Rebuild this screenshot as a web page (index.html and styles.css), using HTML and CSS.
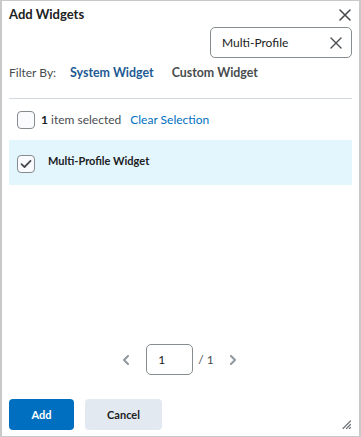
FILE: index.html
```html
<!DOCTYPE html>
<html lang="en">
<head>
  <meta charset="UTF-8">
  <title>Add Widgets</title>
  <link rel="stylesheet" href="styles.css">
</head>
<body>
  <div class="dialog">
    <header class="dialog-head">
      <h1>Add Widgets</h1>
      <button class="close" aria-label="Close">
        <svg width="12" height="12" viewBox="0 0 12 12"><path d="M1 1L11 11M11 1L1 11" stroke="#494c4e" stroke-width="1.6" stroke-linecap="round"/></svg>
      </button>
    </header>

    <div class="search-row">
      <div class="search">
        <span class="search-text">Multi-Profile</span>
        <svg width="12" height="12" viewBox="0 0 12 12"><path d="M1 1L11 11M11 1L1 11" stroke="#494c4e" stroke-width="1.4" stroke-linecap="round"/></svg>
      </div>
    </div>

    <div class="filter">
      <span class="filter-label">Filter By:</span>
      <span class="filter-item active">System Widget</span>
      <span class="filter-item">Custom Widget</span>
    </div>

    <div class="selection">
      <span class="checkbox"></span>
      <span class="count"><b>1</b> item selected</span>
      <a class="clear" href="#">Clear Selection</a>
    </div>

    <div class="list">
      <div class="list-item selected">
        <span class="checkbox checked">
          <svg width="12" height="10" viewBox="0 0 12 10"><path d="M1.5 5.2L4.5 8L10.5 1.8" fill="none" stroke="#494c4e" stroke-width="1.8" stroke-linecap="round" stroke-linejoin="round"/></svg>
        </span>
        <span class="item-name">Multi-Profile Widget</span>
      </div>
    </div>

    <div class="pager">
      <svg class="arrow prev" width="8" height="10" viewBox="0 0 8 10"><path d="M6 1L2 5L6 9" fill="none" stroke="#90989d" stroke-width="2" stroke-linecap="round" stroke-linejoin="round"/></svg>
      <span class="page-input">1</span>
      <span class="page-total">/ 1</span>
      <svg class="arrow" width="8" height="10" viewBox="0 0 8 10"><path d="M2 1L6 5L2 9" fill="none" stroke="#90989d" stroke-width="2" stroke-linecap="round" stroke-linejoin="round"/></svg>
    </div>

    <footer class="dialog-foot">
      <button class="btn primary">Add</button>
      <button class="btn">Cancel</button>
      <svg class="grip" width="9" height="9" viewBox="0 0 9 9"><path d="M8.5 1L1 8.5M8.5 4.5L4.5 8.5M8.5 7.5L7.5 8.5" stroke="#6e7477" stroke-width="1.2" stroke-linecap="round"/></svg>
    </footer>
  </div>
</body>
</html>
```

FILE: styles.css
```css
* {
  margin: 0;
  padding: 0;
  box-sizing: border-box;
}
body {
  font-family: Lato, "Noto Sans", sans-serif;
  color: #494c4e;
  background: #fff;
}
.dialog {
  width: 361px;
  height: 437px;
  border: 1px solid #c9c9c9;
  border-left-width: 2px;
  border-right-width: 2px;
  display: flex;
  flex-direction: column;
  padding: 0 7px;
}
/* Header */
.dialog-head {
  display: flex;
  justify-content: space-between;
  align-items: flex-start;
  height: 26px;
}
.dialog-head h1 {
  font-size: 13px;
  font-weight: 700;
  color: #202122;
  margin-top: 5px;
}
.close {
  border: none;
  background: none;
  margin-top: 8px;
  margin-right: 1px;
  display: flex;
}
/* Search */
.search-row {
  display: flex;
  justify-content: flex-end;
}
.search {
  width: 142px;
  height: 31px;
  border: 1px solid #868c8f;
  border-radius: 5px;
  display: flex;
  align-items: center;
  justify-content: space-between;
  padding: 0 9px 0 11px;
}
.search-text {
  font-size: 12px;
  color: #202122;
}
/* Filter */
.filter {
  display: flex;
  align-items: center;
  font-size: 12px;
  margin-top: 6px;
  height: 17px;
}
.filter-label {
  color: #494c4e;
  margin-right: 14px;
}
.filter-item {
  font-size: 12.4px;
  font-weight: 700;
  color: #494c4e;
  margin-right: 18px;
}
.filter-item.active {
  color: #1d5a94;
}
/* Selection bar */
.selection {
  margin-top: 17px;
  border-top: 1px solid #d3d9e3;
  display: flex;
  align-items: center;
  height: 42px;
  padding-left: 8px;
  font-size: 12px;
}
.checkbox {
  width: 18px;
  height: 18px;
  border: 1px solid #868c8f;
  border-radius: 4px;
  background: #f9fbff;
  display: flex;
  align-items: center;
  justify-content: center;
  flex: none;
}
.count {
  margin-left: 6px;
  color: #494c4e;
}
.count b {
  color: #202122;
}
.clear {
  margin-left: 9px;
  color: #006fbf;
  text-decoration: none;
}
/* List */
.list-item {
  display: flex;
  align-items: flex-start;
  height: 45px;
  background: #e3f6fe;
  padding: 15px 0 0 8px;
}
.item-name {
  font-size: 11px;
  font-weight: 700;
  color: #202122;
  margin: -1px 0 0 13px;
}
/* Pager */
.pager {
  flex: 1;
  display: flex;
  align-items: flex-end;
  justify-content: center;
  padding-bottom: 23px;
  padding-right: 2px;
}
.pager .arrow {
  margin-bottom: 10px;
}
.pager .prev {
  margin-right: 4px;
}
.page-input {
  width: 47px;
  height: 31px;
  border: 1px solid #868c8f;
  border-radius: 5px;
  font-size: 12px;
  color: #202122;
  display: flex;
  align-items: center;
  padding-left: 11px;
  margin: 0 5px 0 12px;
}
.page-total {
  font-size: 12px;
  color: #494c4e;
  margin-right: 15px;
  margin-bottom: 8px;
}
/* Footer */
.dialog-foot {
  display: flex;
  align-items: center;
  height: 38px;
  position: relative;
  gap: 11px;
  padding-bottom: 6px;
}
.btn {
  height: 31px;
  border: none;
  border-radius: 4px;
  font-family: Lato, "Noto Sans", sans-serif;
  font-size: 11px;
  font-weight: 700;
  background: #e3e9f1;
  color: #202122;
  width: 77px;
}
.btn.primary {
  background: #006fbf;
  color: #fff;
  width: 65px;
}
.grip {
  position: absolute;
  right: 1px;
  bottom: 7px;
}
```
